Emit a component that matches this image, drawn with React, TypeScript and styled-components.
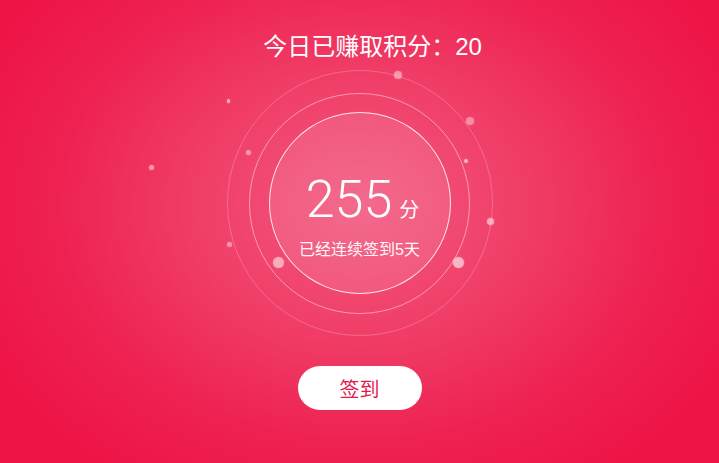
import React from "react";
import styled, { createGlobalStyle } from "styled-components";

const Global = createGlobalStyle`
  html, body { margin: 0; padding: 0; }
  body { width: 719px; height: 463px; overflow: hidden; font-family: "Liberation Sans", "Noto Sans CJK SC", sans-serif; }
`;

const Page = styled.div`
  width: 719px;
  height: 463px;
  display: flex;
  flex-direction: column;
  align-items: center;
  background: radial-gradient(ellipse 420px 330px at 360px 205px, #f25a80 0%, #f03d67 40%, #ee2252 72%, #ee1446 100%);
  color: #fff;
  overflow: hidden;
`;

const Title = styled.div`
  margin-top: 32px;
  padding-left: 26px;
  height: 30px;
  line-height: 30px;
  font-size: 24px;
  font-family: "Liberation Sans", "Noto Sans CJK SC", sans-serif;
`;

const Stage = styled.div`
  position: relative;
  margin-top: 8px;
  width: 266px;
  height: 266px;
`;

const Ring = styled.div<{ $size: number; $line: string; $fill?: string }>`
  width: ${(p) => p.$size}px;
  height: ${(p) => p.$size}px;
  box-sizing: border-box;
  border-radius: 50%;
  border: 1px solid ${(p) => p.$line};
  background: ${(p) => p.$fill || "transparent"};
  display: flex;
  flex-direction: column;
  align-items: center;
  justify-content: center;
`;

const ScoreRow = styled.div`
  display: flex;
  align-items: baseline;
  margin-top: 24px;
  padding-left: 6px;
`;

const Score = styled.span`
  font-family: "Roboto", "Liberation Sans", sans-serif;
  font-weight: 300;
  font-size: 52px;
  line-height: 56px;
`;

const Unit = styled.span`
  font-family: "Noto Sans CJK SC", sans-serif;
  font-size: 20px;
  margin-left: 7px;
`;

const Sub = styled.div`
  margin-top: 13px;
  font-size: 16px;
  line-height: 18px;
  font-family: "Liberation Sans", "Noto Sans CJK SC", sans-serif;
  opacity: 0.95;
`;

const Dot = styled.span<{ $x: number; $y: number; $r: number; $o: number }>`
  position: absolute;
  left: ${(p) => p.$x - p.$r}px;
  top: ${(p) => p.$y - p.$r}px;
  width: ${(p) => p.$r * 2}px;
  height: ${(p) => p.$r * 2}px;
  border-radius: 50%;
  background: rgba(255, 255, 255, ${(p) => p.$o});
  box-shadow: 0 0 2px rgba(255, 255, 255, ${(p) => p.$o * 0.6});
`;

const Button = styled.button`
  margin-top: 30px;
  width: 124px;
  height: 44px;
  border: none;
  border-radius: 22px;
  background: #fff;
  color: #e41a4b;
  font-size: 20px;
  font-family: "Noto Sans CJK SC", sans-serif;
  padding: 0;
  cursor: pointer;
`;

const dots = [
  { x: 171, y: 5, r: 4, o: 0.45 },
  { x: 243, y: 51, r: 4, o: 0.4 },
  { x: 239, y: 91, r: 2, o: 0.6 },
  { x: 264, y: 151, r: 3.5, o: 0.55 },
  { x: 232, y: 192, r: 5.5, o: 0.6 },
  { x: 52, y: 192, r: 5.5, o: 0.55 },
  { x: 3, y: 174, r: 2.5, o: 0.45 },
  { x: 22, y: 82, r: 2.5, o: 0.45 },
  { x: 2, y: 31, r: 1.8, o: 0.6 },
  { x: -75, y: 97, r: 2.5, o: 0.5 },
];

export default function App() {
  return (
    <>
      <Global />
      <Page>
        <Title>今日已赚取积分：20</Title>
        <Stage>
          <Ring $size={266} $line="rgba(255,255,255,0.22)">
            <Ring $size={221} $line="rgba(255,255,255,0.45)">
              <Ring $size={182} $line="rgba(255,255,255,0.85)" $fill="rgba(255,255,255,0.1)">
                <ScoreRow>
                  <Score>255</Score>
                  <Unit>分</Unit>
                </ScoreRow>
                <Sub>已经连续签到5天</Sub>
              </Ring>
            </Ring>
          </Ring>
          {dots.map((d, i) => (
            <Dot key={i} $x={d.x} $y={d.y} $r={d.r} $o={d.o} />
          ))}
        </Stage>
        <Button>签到</Button>
      </Page>
    </>
  );
}
